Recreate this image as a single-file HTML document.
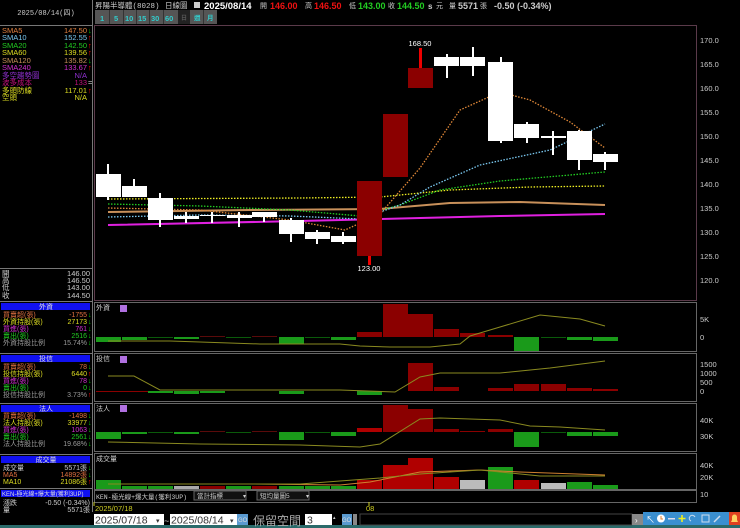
<!DOCTYPE html>
<html><head><meta charset="utf-8"><style>
html,body{margin:0;padding:0;background:#000;width:740px;height:528px;overflow:hidden}
svg{display:block}
text{font-family:"Liberation Sans","Noto Sans CJK TC",sans-serif}
.m{font-family:"Liberation Mono","Noto Sans CJK TC",monospace}
</style></head><body>
<svg width="740" height="528" viewBox="0 0 740 528" xmlns="http://www.w3.org/2000/svg" font-size="8">
<rect width="740" height="528" fill="#000"/>
<line x1="92.5" y1="0" x2="92.5" y2="512" stroke="#777" stroke-width="1"/>
<line x1="0" y1="25.5" x2="92" y2="25.5" stroke="#777"/>
<line x1="0" y1="268.5" x2="92" y2="268.5" stroke="#777"/>
<line x1="0" y1="301.5" x2="92" y2="301.5" stroke="#777"/>
<line x1="0" y1="353.5" x2="92" y2="353.5" stroke="#777"/>
<line x1="0" y1="403.5" x2="92" y2="403.5" stroke="#777"/>
<line x1="0" y1="454.5" x2="92" y2="454.5" stroke="#777"/>
<line x1="0" y1="488.5" x2="92" y2="488.5" stroke="#777"/>
<text x="46" y="15" text-anchor="middle" class="m" fill="#ccc" font-size="7">2025/08/14(四)</text>
<g class="m" font-size="7.5">
<text x="2" y="33" fill="#e08040">SMA5</text><text x="87" y="33" text-anchor="end" fill="#e08040">147.50</text><text x="88" y="33" fill="#0c0">↓</text>
<text x="2" y="40" fill="#7ac8f0">SMA10</text><text x="87" y="40" text-anchor="end" fill="#7ac8f0">152.55</text><text x="88" y="40" fill="#f00">↑</text>
<text x="2" y="48" fill="#2c2">SMA20</text><text x="87" y="48" text-anchor="end" fill="#2c2">142.50</text><text x="88" y="48" fill="#f00">↑</text>
<text x="2" y="55" fill="#dd2">SMA60</text><text x="87" y="55" text-anchor="end" fill="#dd2">139.56</text><text x="88" y="55" fill="#f00">↑</text>
<text x="2" y="63" fill="#c8905a">SMA120</text><text x="87" y="63" text-anchor="end" fill="#c8905a">135.82</text><text x="88" y="63" fill="#0c0">↓</text>
<text x="2" y="70" fill="#d030d0">SMA240</text><text x="87" y="70" text-anchor="end" fill="#d030d0">133.67</text><text x="88" y="70" fill="#f00">↑</text>
<text x="2" y="78" fill="#9030d0">多空趨勢圖</text><text x="87" y="78" text-anchor="end" fill="#9030d0">N/A</text>
<text x="2" y="85" fill="#c0107a">波多成本</text><text x="87" y="85" text-anchor="end" fill="#c0107a">133</text><text x="88" y="85" fill="#ccc">=</text>
<text x="2" y="93" fill="#dd2">多頭防線</text><text x="87" y="93" text-anchor="end" fill="#dd2">117.01</text><text x="88" y="93" fill="#f00">↑</text>
<text x="2" y="100" fill="#dd2">空頭</text><text x="87" y="100" text-anchor="end" fill="#dd2">N/A</text>
<text x="2" y="276" fill="#ccc">開</text><text x="90" y="276" text-anchor="end" fill="#ccc">146.00</text>
<text x="2" y="283" fill="#ccc">高</text><text x="90" y="283" text-anchor="end" fill="#ccc">146.50</text>
<text x="2" y="290" fill="#ccc">低</text><text x="90" y="290" text-anchor="end" fill="#ccc">143.00</text>
<text x="2" y="298" fill="#ccc">收</text><text x="90" y="298" text-anchor="end" fill="#ccc">144.50</text>
</g>
<rect x="1" y="303" width="89" height="7" fill="#1010f0"/><text x="46" y="309" text-anchor="middle" fill="#ddd" font-size="7">外資</text>
<rect x="1" y="355" width="89" height="7" fill="#1010f0"/><text x="46" y="361" text-anchor="middle" fill="#ddd" font-size="7">投信</text>
<rect x="1" y="405" width="89" height="7" fill="#1010f0"/><text x="46" y="411" text-anchor="middle" fill="#ddd" font-size="7">法人</text>
<rect x="1" y="456" width="89" height="7" fill="#1010f0"/><text x="46" y="462" text-anchor="middle" fill="#ddd" font-size="7">成交量</text>
<rect x="1" y="490" width="89" height="7" fill="#1010f0"/><text x="2" y="496" fill="#ddd" font-size="6">KEN-極光線+爆大量(獲利3UP)</text>
<g class="m" font-size="7">
<text x="3" y="317" fill="#e07040">買賣超(張)</text><text x="87" y="317" text-anchor="end" fill="#e07040">-1755</text><text x="88" y="317" fill="#0c0">↓</text>
<text x="3" y="324" fill="#dd2">外資持股(張)</text><text x="87" y="324" text-anchor="end" fill="#dd2">27173</text><text x="88" y="324" fill="#0c0">↓</text>
<text x="3" y="331" fill="#d030d0">買進(張)</text><text x="87" y="331" text-anchor="end" fill="#d030d0">761</text><text x="88" y="331" fill="#0c0">↓</text>
<text x="3" y="338" fill="#2c2">賣出(張)</text><text x="87" y="338" text-anchor="end" fill="#2c2">2516</text><text x="88" y="338" fill="#0c0">↓</text>
<text x="3" y="345" fill="#999">外資持股比例</text><text x="87" y="345" text-anchor="end" fill="#999">15.74%</text><text x="88" y="345" fill="#0c0">↓</text>
<text x="3" y="369" fill="#e07040">買賣超(張)</text><text x="87" y="369" text-anchor="end" fill="#e07040">78</text><text x="88" y="369" fill="#0c0">↓</text>
<text x="3" y="376" fill="#dd2">投信持股(張)</text><text x="87" y="376" text-anchor="end" fill="#dd2">6440</text><text x="88" y="376" fill="#f00">↑</text>
<text x="3" y="383" fill="#d030d0">買進(張)</text><text x="87" y="383" text-anchor="end" fill="#d030d0">78</text><text x="88" y="383" fill="#0c0">↓</text>
<text x="3" y="390" fill="#2c2">賣出(張)</text><text x="87" y="390" text-anchor="end" fill="#2c2">0</text><text x="88" y="390" fill="#0c0">↓</text>
<text x="3" y="397" fill="#999">投信持股比例</text><text x="87" y="397" text-anchor="end" fill="#999">3.73%</text><text x="88" y="397" fill="#f00">↑</text>
<text x="3" y="418" fill="#e07040">買賣超(張)</text><text x="87" y="418" text-anchor="end" fill="#e07040">-1498</text><text x="88" y="418" fill="#0c0">↓</text>
<text x="3" y="425" fill="#dd2">法人持股(張)</text><text x="87" y="425" text-anchor="end" fill="#dd2">33977</text><text x="88" y="425" fill="#0c0">↓</text>
<text x="3" y="432" fill="#d030d0">買進(張)</text><text x="87" y="432" text-anchor="end" fill="#d030d0">1063</text><text x="88" y="432" fill="#0c0">↓</text>
<text x="3" y="439" fill="#2c2">賣出(張)</text><text x="87" y="439" text-anchor="end" fill="#2c2">2561</text><text x="88" y="439" fill="#0c0">↓</text>
<text x="3" y="446" fill="#999">法人持股比例</text><text x="87" y="446" text-anchor="end" fill="#999">19.68%</text><text x="88" y="446" fill="#0c0">↓</text>
<text x="3" y="470" fill="#ccc">成交量</text><text x="87" y="470" text-anchor="end" fill="#ccc">5571張</text><text x="88" y="470" fill="#0c0">↓</text>
<text x="3" y="477" fill="#e07040">MA5</text><text x="87" y="477" text-anchor="end" fill="#e07040">14892張</text><text x="88" y="477" fill="#0c0">↓</text>
<text x="3" y="484" fill="#dd2">MA10</text><text x="87" y="484" text-anchor="end" fill="#dd2">21086張</text><text x="88" y="484" fill="#f00">↑</text>
<text x="3" y="505" fill="#ccc">漲跌</text><text x="90" y="505" text-anchor="end" fill="#ccc">-0.50 (-0.34%)</text>
<text x="3" y="512" fill="#ccc">量</text><text x="90" y="512" text-anchor="end" fill="#ccc">5571張</text>
</g>
<text x="95" y="8" class="m" fill="#ccc" font-size="7.5">昇陽半導體(8028)</text>
<text x="165" y="8" class="m" fill="#ccc" font-size="7.5">日線圖</text>
<rect x="194" y="2" width="6" height="6" fill="#ccc"/>
<text x="204" y="9" fill="#fff" font-weight="bold" font-size="9.5">2025/08/14</text>
<text x="260" y="8" fill="#ccc" font-size="7">開</text><text x="270" y="9" fill="#e11" font-weight="bold" font-size="9">146.00</text>
<text x="305" y="8" fill="#ccc" font-size="7">高</text><text x="314" y="9" fill="#e11" font-weight="bold" font-size="9">146.50</text>
<text x="349" y="8" fill="#ccc" font-size="7">低</text><text x="358" y="9" fill="#2c2" font-weight="bold" font-size="9">143.00</text>
<text x="388" y="8" fill="#ccc" font-size="7">收</text><text x="397" y="9" fill="#2c2" font-weight="bold" font-size="9">144.50</text>
<text x="428" y="9" fill="#ccc" font-weight="bold" font-size="8">s</text><text x="436" y="8" fill="#ccc" font-size="7">元</text>
<text x="449" y="8" fill="#ccc" font-size="7">量</text><text x="458" y="9" fill="#ccc" font-weight="bold" font-size="9">5571</text><text x="480" y="8" fill="#ccc" font-size="7">張</text>
<text x="494" y="9" fill="#ccc" font-weight="bold" font-size="9">-0.50 (-0.34%)</text>
<g font-size="7.5" font-weight="bold">
<rect x="95" y="10" width="122" height="14" fill="#555"/>
<rect x="178" y="10" width="12" height="14" fill="#222"/>
<g fill="#3cc"><text x="100" y="21">1</text><text x="114" y="21">5</text><text x="125" y="21">10</text><text x="138" y="21">15</text><text x="151" y="21">30</text><text x="165" y="21">60</text><text x="181" y="20" fill="#555" font-size="6">日</text><text x="194" y="20" font-size="6.5">週</text><text x="207" y="20" font-size="6.5">月</text></g>
<g stroke="#333"><line x1="109.5" y1="10" x2="109.5" y2="24"/><line x1="123.5" y1="10" x2="123.5" y2="24"/><line x1="136.5" y1="10" x2="136.5" y2="24"/><line x1="149.5" y1="10" x2="149.5" y2="24"/><line x1="163.5" y1="10" x2="163.5" y2="24"/><line x1="203.5" y1="10" x2="203.5" y2="24"/></g>
</g>
<g fill="none">
<rect x="94.5" y="25.5" width="602" height="275" stroke="#5a3a4a"/>
<rect x="94.5" y="302.5" width="602" height="49" stroke="#666"/>
<rect x="94.5" y="353.5" width="602" height="48" stroke="#666"/>
<rect x="94.5" y="403.5" width="602" height="48" stroke="#666"/>
<rect x="94.5" y="453.5" width="602" height="36" stroke="#666"/>
<rect x="94.5" y="490.5" width="602" height="12" stroke="#666"/>
</g>
<g fill="#ccc" font-size="7.5">
<text x="700" y="43">170.0</text><text x="700" y="67">165.0</text><text x="700" y="91">160.0</text><text x="700" y="115">155.0</text><text x="700" y="139">150.0</text><text x="700" y="163">145.0</text><text x="700" y="187">140.0</text><text x="700" y="211">135.0</text><text x="700" y="235">130.0</text><text x="700" y="259">125.0</text><text x="700" y="283">120.0</text>
<text x="700" y="322">5K</text><text x="700" y="340">0</text>
<text x="700" y="367">1500</text><text x="700" y="376">1000</text><text x="700" y="385">500</text><text x="700" y="394">0</text>
<text x="700" y="423">40K</text><text x="700" y="439">30K</text>
<text x="700" y="468">40K</text><text x="700" y="480">20K</text><text x="700" y="497">10</text>
</g>
<g fill="none">
<polyline points="108,225 300,221 500,216 605,214" stroke="#e020e0" stroke-width="2"/>
<polyline points="108,212 250,210 380,209 450,203 520,202 605,205" stroke="#c8905a" stroke-width="2"/>
<polyline points="108,199 300,198 380,197 450,190 530,187 605,186" stroke="#ee2" stroke-width="1.3" stroke-dasharray="1.5 1.5"/>
<polyline points="108,204 200,206 290,210 360,216 400,205 440,190 500,181 605,172" stroke="#2c2" stroke-width="1.3" stroke-dasharray="1.5 1.5"/>
<polyline points="108,217 200,215 290,216 360,219 400,205 430,187 480,165 550,150 605,124" stroke="#7ac8f0" stroke-width="1.3" stroke-dasharray="1.5 1.5"/>
<polyline points="108,208 200,210 290,220 345,230 380,214 420,168 460,110 500,92 530,100 570,122 605,148" stroke="#e08838" stroke-width="1.3" stroke-dasharray="1.5 1.5"/>
</g>
<g fill="#fff">
<rect x="107" y="164" width="2" height="36"/><rect x="96" y="174" width="25" height="23"/>
<rect x="133" y="179" width="2" height="18"/><rect x="122" y="186" width="25" height="11"/>
<rect x="159" y="193" width="2" height="34"/><rect x="148" y="198" width="25" height="22"/>
<rect x="185" y="212" width="2" height="11"/><rect x="174" y="216" width="25" height="3"/>
<rect x="211" y="212" width="2" height="11"/><rect x="200" y="215" width="25" height="1"/>
<rect x="238" y="212" width="2" height="15"/><rect x="227" y="215" width="25" height="3"/>
<rect x="263" y="212" width="2" height="10"/><rect x="252" y="212" width="25" height="5"/>
<rect x="290" y="218" width="2" height="24"/><rect x="279" y="220" width="25" height="14"/>
<rect x="316" y="230" width="2" height="14"/><rect x="305" y="232" width="25" height="7"/>
<rect x="342" y="232" width="2" height="12"/><rect x="331" y="236" width="25" height="6"/>
<rect x="446" y="54" width="2" height="24"/><rect x="434" y="57" width="25" height="9"/>
<rect x="472" y="47" width="2" height="29"/><rect x="460" y="57" width="25" height="9"/>
<rect x="500" y="57" width="2" height="86"/><rect x="488" y="62" width="25" height="79"/>
<rect x="526" y="122" width="2" height="21"/><rect x="514" y="124" width="25" height="14"/>
<rect x="552" y="131" width="2" height="24"/><rect x="541" y="136" width="25" height="2"/>
<rect x="578" y="130" width="2" height="40"/><rect x="567" y="131" width="25" height="29"/>
<rect x="604" y="152" width="2" height="18"/><rect x="593" y="154" width="25" height="8"/>
</g>
<rect x="368" y="255" width="3" height="10" fill="#e00"/>
<rect x="357" y="181" width="25" height="75" fill="#8b0000"/>
<rect x="383" y="114" width="25" height="63" fill="#8b0000"/>
<rect x="419" y="48" width="3" height="22" fill="#e00"/>
<rect x="408" y="68" width="25" height="20" fill="#8b0000"/>
<text x="420" y="46" text-anchor="middle" fill="#fff" font-size="7.5">168.50</text>
<text x="369" y="271" text-anchor="middle" fill="#fff" font-size="7.5">123.00</text>
<text x="96" y="310" fill="#ccc" font-size="7">外資</text><rect x="120" y="305" width="7" height="7" fill="#b070e0"/>
<g>
<rect x="96" y="337" width="25" height="5" fill="#1a9a1a"/><rect x="122" y="337" width="25" height="3" fill="#1a9a1a"/><rect x="148" y="337" width="25" height="1" fill="#0a5a0a"/><rect x="174" y="337" width="25" height="2" fill="#1a9a1a"/><rect x="200" y="336" width="25" height="1" fill="#5a0a0a"/><rect x="226" y="337" width="25" height="1" fill="#0a5a0a"/><rect x="252" y="336" width="25" height="1" fill="#5a0a0a"/><rect x="279" y="337" width="25" height="7" fill="#1a9a1a"/><rect x="305" y="337" width="25" height="1" fill="#0a5a0a"/><rect x="331" y="337" width="25" height="3" fill="#1a9a1a"/>
<rect x="357" y="332" width="25" height="5" fill="#8b0000"/><rect x="383" y="304" width="25" height="33" fill="#8b0000"/><rect x="408" y="314" width="25" height="23" fill="#8b0000"/><rect x="434" y="329" width="25" height="8" fill="#8b0000"/><rect x="460" y="333" width="25" height="4" fill="#8b0000"/><rect x="488" y="335" width="25" height="2" fill="#8b0000"/>
<rect x="514" y="337" width="25" height="14" fill="#1a9a1a"/><rect x="541" y="337" width="25" height="1" fill="#0a5a0a"/><rect x="567" y="337" width="25" height="3" fill="#1a9a1a"/><rect x="593" y="337" width="25" height="4" fill="#1a9a1a"/>
<polyline points="108,341 170,341 200,342 260,344 340,344 360,346 390,347 430,347 460,344 470,336 500,327 540,315 580,319 605,326" fill="none" stroke="#8a8a20" stroke-width="1"/>
</g>
<text x="96" y="361" fill="#ccc" font-size="7">投信</text><rect x="120" y="356" width="7" height="7" fill="#b070e0"/>
<rect x="96" y="391" width="60" height="1" fill="#8b0000"/>
<rect x="148" y="391" width="25" height="2" fill="#1a9a1a"/><rect x="174" y="391" width="25" height="3" fill="#1a9a1a"/><rect x="200" y="391" width="25" height="2" fill="#1a9a1a"/><rect x="279" y="391" width="25" height="3" fill="#1a9a1a"/><rect x="357" y="391" width="25" height="4" fill="#1a9a1a"/>
<rect x="408" y="363" width="25" height="28" fill="#8b0000"/><rect x="434" y="387" width="25" height="4" fill="#8b0000"/><rect x="488" y="388" width="25" height="3" fill="#8b0000"/><rect x="514" y="384" width="25" height="7" fill="#8b0000"/><rect x="541" y="384" width="25" height="7" fill="#8b0000"/><rect x="567" y="388" width="25" height="3" fill="#8b0000"/><rect x="593" y="389" width="25" height="2" fill="#8b0000"/>
<polyline points="108,376 134,376 160,390 340,390 395,392 420,377 440,373 500,373 550,368 605,361" fill="none" stroke="#8a8a20"/>
<text x="96" y="411" fill="#ccc" font-size="7">法人</text><rect x="120" y="405" width="7" height="7" fill="#b070e0"/>
<rect x="96" y="432" width="25" height="7" fill="#1a9a1a"/><rect x="122" y="432" width="25" height="2" fill="#1a9a1a"/><rect x="148" y="432" width="25" height="1" fill="#0a5a0a"/><rect x="174" y="432" width="25" height="2" fill="#1a9a1a"/><rect x="200" y="431" width="25" height="1" fill="#5a0a0a"/><rect x="226" y="432" width="25" height="1" fill="#0a5a0a"/><rect x="252" y="431" width="25" height="1" fill="#5a0a0a"/><rect x="279" y="432" width="25" height="8" fill="#1a9a1a"/><rect x="305" y="432" width="25" height="1" fill="#0a5a0a"/><rect x="331" y="432" width="25" height="4" fill="#1a9a1a"/>
<rect x="357" y="428" width="25" height="4" fill="#b00000"/><rect x="383" y="405" width="25" height="27" fill="#8b0000"/><rect x="408" y="409" width="25" height="23" fill="#8b0000"/><rect x="434" y="429" width="25" height="3" fill="#8b0000"/><rect x="460" y="431" width="25" height="1" fill="#8b0000"/><rect x="488" y="429" width="25" height="3" fill="#8b0000"/>
<rect x="514" y="432" width="25" height="15" fill="#1a9a1a"/><rect x="541" y="432" width="25" height="1" fill="#0a5a0a"/><rect x="567" y="432" width="25" height="4" fill="#1a9a1a"/><rect x="593" y="432" width="25" height="4" fill="#1a9a1a"/>
<polyline points="108,442 200,444 300,445 360,447 380,444 420,419 440,418 500,420 530,426 560,427 605,430" fill="none" stroke="#8a8a20"/>
<text x="96" y="461" fill="#ccc" font-size="7">成交量</text>
<rect x="96" y="480" width="25" height="9" fill="#1a9a1a"/><rect x="122" y="486" width="25" height="3" fill="#1a9a1a"/><rect x="148" y="486" width="25" height="3" fill="#1a9a1a"/><rect x="174" y="486" width="25" height="3" fill="#aaa"/><rect x="200" y="486" width="25" height="3" fill="#8b0000"/><rect x="226" y="486" width="25" height="3" fill="#1a9a1a"/><rect x="252" y="486" width="25" height="3" fill="#8b0000"/><rect x="279" y="486" width="25" height="3" fill="#1a9a1a"/><rect x="305" y="486" width="25" height="3" fill="#1a9a1a"/><rect x="331" y="486" width="25" height="3" fill="#1a9a1a"/>
<rect x="357" y="480" width="25" height="9" fill="#b00000"/><rect x="383" y="465" width="25" height="24" fill="#b00000"/><rect x="408" y="458" width="25" height="31" fill="#b00000"/><rect x="434" y="477" width="25" height="12" fill="#b00000"/><rect x="460" y="480" width="25" height="9" fill="#bbb"/><rect x="488" y="467" width="25" height="22" fill="#1a9a1a"/><rect x="514" y="480" width="25" height="9" fill="#b00000"/><rect x="541" y="483" width="25" height="6" fill="#bbb"/><rect x="567" y="482" width="25" height="7" fill="#1a9a1a"/><rect x="593" y="485" width="25" height="4" fill="#1a9a1a"/>
<polyline points="108,484 250,484 340,485 370,482 420,472 480,470 520,472 605,475" fill="none" stroke="#d08030"/>
<polyline points="108,484 300,484 380,478 420,474 480,470 540,476 605,476" fill="none" stroke="#8a8a20"/>
<text x="96" y="499" class="m" fill="#ccc" font-size="6.5">KEN-極光線+爆大量(獲利3UP)</text>
<rect x="194" y="491" width="52" height="9" fill="#111" stroke="#666"/><text x="197" y="498" fill="#ccc" font-size="6.5">當計指標</text><text x="243" y="498" fill="#ccc" font-size="6">▾</text>
<rect x="257" y="491" width="52" height="9" fill="#111" stroke="#666"/><text x="260" y="498" fill="#ccc" font-size="6.5">短均量圖5</text><text x="306" y="498" fill="#ccc" font-size="6">▾</text>
<text x="95" y="511" fill="#cc2" font-size="7.5">2025/07/18</text>
<text x="366" y="511" fill="#cc2" font-size="7.5">08</text>
<line x1="94" y1="502" x2="94" y2="506" stroke="#cc2"/><line x1="369" y1="502" x2="369" y2="506" stroke="#cc2"/>
<rect x="0" y="525" width="740" height="3" fill="#2a6a6a"/>
<rect x="94" y="514" width="70" height="11" fill="#fff"/><text x="95" y="523.5" fill="#333" font-size="10.5">2025/07/18</text><text x="156" y="523" fill="#333" font-size="7">▾</text>
<text x="164" y="524" fill="#ccc" font-size="9">~</text>
<rect x="170" y="514" width="67" height="11" fill="#fff"/><text x="171" y="523.5" fill="#333" font-size="10.5">2025/08/14</text><text x="230" y="523" fill="#333" font-size="7">▾</text>
<rect x="237" y="514" width="11" height="11" fill="#5a9ad0"/><text x="238" y="522" fill="#ddd" font-size="6">GO</text>
<text x="253" y="525" fill="#aaa" font-size="12">保留空間</text>
<rect x="305" y="514" width="27" height="11" fill="#fff"/><text x="307" y="523.5" fill="#333" font-size="10.5">3</text><text x="333" y="519" fill="#ccc" font-size="5">▴</text>
<rect x="342" y="514" width="10" height="11" fill="#5a9ad0"/><text x="342" y="522" fill="#ddd" font-size="6">GO</text>
<rect x="353" y="514" width="4" height="11" fill="#888"/>
<rect x="360" y="514" width="272" height="11" fill="#000" stroke="#444"/>
<rect x="632" y="514" width="11" height="11" fill="#888"/><text x="635" y="523" fill="#fff" font-size="8">›</text>
<rect x="643" y="512" width="86" height="13" fill="#3a8fd0"/>
<rect x="729" y="512" width="11" height="13" fill="#e04020"/>
<text x="646" y="523" fill="#fff" font-size="9">↖</text>
<circle cx="661" cy="518.5" r="4" fill="#fff"/><path d="M661 516v3h2" stroke="#e08030" fill="none"/>
<rect x="668" y="518" width="7" height="1.5" fill="#dde"/>
<path d="M682 515v7M678.5 518.5h7" stroke="#ee2" stroke-width="1.6"/>
<path d="M691 521a3 3 0 1 1 4 -4" stroke="#cde" fill="none"/>
<rect x="702" y="515" width="7" height="7" fill="none" stroke="#cde"/>
<path d="M714 522l6 -6" stroke="#cde" stroke-width="1.5"/>
<path d="M731 522h7l-1 -2v-3a2.5 2.5 0 0 0 -5 0v3z" fill="#ffd060"/>
</svg>
</body></html>
